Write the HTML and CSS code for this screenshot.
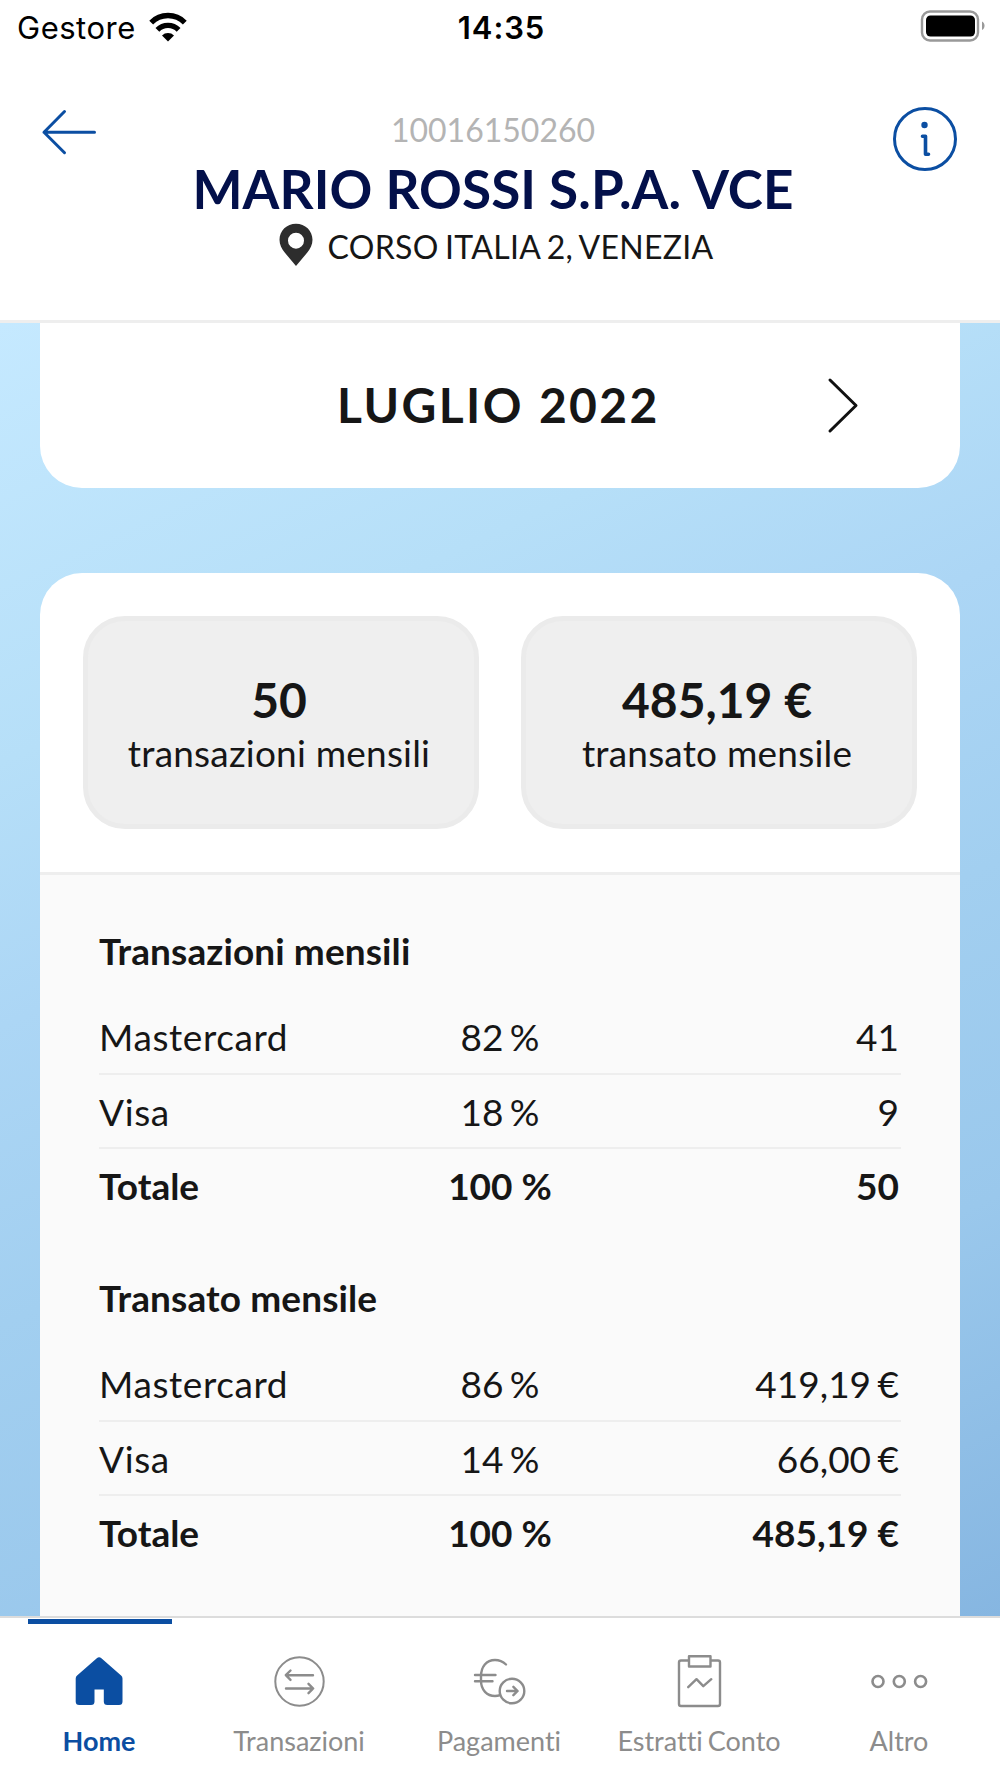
FILE: index.html
```html
<!DOCTYPE html>
<html lang="it">
<head>
    <meta charset="UTF-8">
    <meta name="viewport" content="width=device-width, initial-scale=1.0">
    <title>Mario Rossi S.P.A. - Luglio 2022</title>
    <link rel="stylesheet" href="styles.css">
</head>
<body>
    <div class="status-bar">
        <div class="carrier">
            <span class="carrier-name">Gestore</span>
            <svg class="wifi" width="38" height="30" viewBox="0 0 38 30" fill="none" stroke="#000">
                <path d="M2.2 10.600a23.600 23.600 0 0 1 33.600 0" stroke-width="5.400"/>
                <path d="M8.400 17.800a15 15 0 0 1 21.200 0" stroke-width="5.400"/>
                <path d="M19 29.500l-6-6a8.600 8.600 0 0 1 12 0z" fill="#000" stroke="none"/>
            </svg>
        </div>
        <span class="time">14:35</span>
        <div class="battery-box">
            <svg width="66" height="32" viewBox="0 0 66 32">
                <rect x="2" y="1.5" width="56" height="29" rx="8" fill="none" stroke="#999" stroke-width="2.4"/>
                <rect x="6" y="5.500" width="49" height="21" rx="4.500" fill="#000"/>
                <path d="M62 11.500c3.400 1.600 3.400 7 0 8.600z" fill="#999"/>
            </svg>
        </div>
    </div>

    <header class="header">
        <svg class="back" width="56" height="48" viewBox="0 0 56 48" fill="none" stroke="#0b4ea2" stroke-width="3" stroke-linecap="round" stroke-linejoin="round">
            <path d="M53.500 24.200H3M23.500 3.500L3 24.200l20.500 20.500"/>
        </svg>
        <div class="merchant">
            <p class="merchant-id">10016150260</p>
            <h1>MARIO ROSSI S.P.A. VCE</h1>
            <p class="address">
                <svg width="34" height="44" viewBox="0 0 34 44">
                    <path d="M17 .800C7.800.800.500 7.800.500 16.700c0 5 2.200 8.800 5 12.600L17 43l11.500-13.700c2.800-3.800 5-7.600 5-12.600C33.500 7.800 26.200.800 17 .800zM17 9.700a8 8 0 1 1 0 16 8 8 0 0 1 0-16z" fill="#2d2d2d"/>
                </svg>
                <span>CORSO ITALIA 2, VENEZIA</span>
            </p>
        </div>
        <svg class="info" width="66" height="66" viewBox="0 0 66 66" fill="none" stroke="#0b4ea2">
            <circle cx="33" cy="33" r="30.500" stroke-width="3"/>
            <circle cx="32.500" cy="19" r="3.200" fill="#0b4ea2" stroke="none"/>
            <path d="M30.500 30.300h3V48.200h3" stroke-width="3.600" stroke-linecap="round" stroke-linejoin="round"/>
        </svg>
    </header>

    <main class="content">
        <section class="month-card">
            <h2>LUGLIO 2022</h2>
            <svg class="next" width="34" height="58" viewBox="0 0 34 58" fill="none" stroke="#111" stroke-width="3" stroke-linecap="round" stroke-linejoin="round">
                <path d="M4 4l26 25.500L4 55"/>
            </svg>
        </section>

        <section class="summary-card">
            <div class="stats">
                <div class="stat">
                    <strong>50</strong>
                    <span class="stat-label">transazioni mensili</span>
                </div>
                <div class="stat">
                    <strong>485,19 €</strong>
                    <span class="stat-label">transato mensile</span>
                </div>
            </div>

            <div class="details">
                <h3>Transazioni mensili</h3>
                <div class="rows">
                    <div class="row"><span>Mastercard</span><span>82 %</span><span>41</span></div>
                    <div class="row"><span>Visa</span><span>18 %</span><span>9</span></div>
                    <div class="row total"><span>Totale</span><span>100 %</span><span>50</span></div>
                </div>
                <h3>Transato mensile</h3>
                <div class="rows">
                    <div class="row"><span>Mastercard</span><span>86 %</span><span>419,19 €</span></div>
                    <div class="row"><span>Visa</span><span>14 %</span><span>66,00 €</span></div>
                    <div class="row total"><span>Totale</span><span>100 %</span><span>485,19 €</span></div>
                </div>
            </div>
        </section>
    </main>

    <nav class="tabs">
        <a class="tab active">
            <svg width="56" height="56" viewBox="0 0 56 56">
                <path d="M25.800 5.200a3.500 3.500 0 0 1 4.600 0l19.700 17.200a4 4 0 0 1 1.400 3V48.500a3.500 3.500 0 0 1-3.500 3.500H36.300a3.500 3.500 0 0 1-3.500-3.500V36.500h-9.300V48.500a3.500 3.500 0 0 1-3.500 3.500H8.200a3.500 3.500 0 0 1-3.500-3.500V25.400a4 4 0 0 1 1.400-3z" fill="#0b4ea2"/>
            </svg>
            <span>Home</span>
        </a>
        <a class="tab">
            <svg width="56" height="56" viewBox="0 0 56 56" fill="none" stroke="#8c8c8c" stroke-width="2.400" stroke-linecap="round" stroke-linejoin="round">
                <circle cx="28.500" cy="28.500" r="24.200" stroke-width="2"/>
                <path d="M42 22.200H15.500M19.500 17.500l-4.700 4.700 4.700 4.700M15 35.500H42M37.500 30.800l4.700 4.700-4.700 4.700"/>
            </svg>
            <span>Transazioni</span>
        </a>
        <a class="tab">
            <svg width="56" height="56" viewBox="0 0 56 56" fill="none" stroke="#8c8c8c" stroke-width="2.400" stroke-linecap="round" stroke-linejoin="round">
                <path d="M35 11.500C31.500 8.200 28 7 24 7 15.500 7 10 13.500 10 23.500v4C10 37 16 43 24 43c2 0 3.500-.300 5-.900M4 22H24.500M4 28.300H21.500"/>
                <circle cx="41" cy="38" r="12.300"/>
                <path d="M36 38H46.200M42.400 33.800l4.200 4.200-4.200 4.200"/>
            </svg>
            <span>Pagamenti</span>
        </a>
        <a class="tab">
            <svg width="56" height="56" viewBox="0 0 56 56" fill="none" stroke="#8c8c8c" stroke-width="2.400" stroke-linejoin="round">
                <path d="M18 7.500H10a2 2 0 0 0-2 2V51a2 2 0 0 0 2 2H47a2 2 0 0 0 2-2V9.500a2 2 0 0 0-2-2H39.500"/>
                <rect x="18" y="3.200" width="21.500" height="10.300"/>
                <path d="M17.200 34.200l8.300-8 6.800 7 8-7" stroke-linecap="round"/>
            </svg>
            <span>Estratti Conto</span>
        </a>
        <a class="tab">
            <svg width="60" height="56" viewBox="0 0 60 56" fill="none" stroke="#8c8c8c" stroke-width="2.600">
                <circle cx="9" cy="28.500" r="5.500"/>
                <circle cx="30.300" cy="28.500" r="5.500"/>
                <circle cx="51.600" cy="28.500" r="5.500"/>
            </svg>
            <span>Altro</span>
        </a>
    </nav>
</body>
</html>
```

FILE: styles.css
```css
* {
    box-sizing: border-box;
}

body {
    font-family: Lato, sans-serif;
    font-variant-ligatures: none;
    background-color: #fff;
    color: #161616;
    margin: 0;
    height: 1778px;
    display: flex;
    flex-direction: column;
    overflow: hidden;
}

h1, h2, h3, p {
    margin: 0;
}

svg {
    display: block;
    flex-shrink: 0;
}

/* Barra di stato */
.status-bar {
    display: flex;
    height: 56px;
    padding: 0 14px 0 17px;
    font-family: Inter, sans-serif;
    font-size: 31px;
    line-height: 55px;
    color: #000;
}

.carrier, .battery-box {
    flex: 1;
    display: flex;
}

.carrier {
    gap: 13px;
}

.carrier-name {
    letter-spacing: 0.5px;
}

.wifi {
    margin-top: 12px;
}

.time {
    font-weight: 600;
    letter-spacing: 0.9px;
}

.battery-box {
    justify-content: flex-end;
    padding-top: 10px;
}

/* Intestazione */
.header {
    display: flex;
    justify-content: space-between;
    height: 267px;
    padding: 50px 42px 0 41px;
    border-bottom: 3px solid #eee;
}

.back {
    margin-top: 2px;
}

.merchant {
    text-align: center;
    padding-top: 4px;
    margin-right: 3px;
}

.merchant-id {
    font-size: 32px;
    line-height: 40px;
    color: #b4b4b4;
}

h1 {
    font-size: 53px;
    line-height: 64px;
    letter-spacing: 0.1px;
    margin-top: 7px;
    color: #03104a;
    white-space: nowrap;
}

.address {
    display: flex;
    justify-content: center;
    gap: 15px;
    font-size: 32px;
    line-height: 48px;
    letter-spacing: 0.3px;
    word-spacing: -2px;
    margin-top: 2px;
    padding-left: 6px;
}

/* Contenuto */
.content {
    flex: 1;
    min-height: 0;
    overflow: hidden;
    padding: 0 40px;
    background: linear-gradient(155deg, #c5e9ff 0%, #b6dff8 25%, #acd6f5 40%, #a2cff0 57%, #9ac8ec 76%, #86b6e1 100%);
}

.month-card {
    display: flex;
    align-items: center;
    justify-content: flex-end;
    height: 165px;
    padding: 0 100px 2px 297px;
    background-color: #fff;
    border-radius: 0 0 42px 42px;
}

h2 {
    flex: 1;
    font-size: 48px;
    line-height: 58px;
    letter-spacing: 2.4px;
    word-spacing: 1px;
}

.summary-card {
    margin-top: 85px;
    background-color: #fff;
    border-radius: 42px 42px 0 0;
    overflow: hidden;
}

.stats {
    display: flex;
    gap: 42px;
    padding: 43px;
    border-bottom: 3px solid #eee;
}

.stat {
    flex: 1;
    height: 213px;
    padding: 50px 4px 0 0;
    text-align: center;
    background-color: #efefef;
    border: 5px solid #ebebeb;
    border-radius: 42px;
}

.stat strong {
    display: block;
    font-size: 48px;
    line-height: 58px;
}

.stat-label {
    display: block;
    font-size: 37px;
    line-height: 48px;
    letter-spacing: 0.2px;
}

.details {
    padding: 52px 59px;
    background-color: #fafafa;
}

h3 {
    font-size: 37px;
    line-height: 48px;
    letter-spacing: 0.1px;
}

.rows {
    margin: 25px 0 50px;
}

.row {
    display: grid;
    grid-template-columns: 1fr 1fr 1fr;
    height: 74.7px;
    padding-top: 13px;
    font-size: 37px;
    line-height: 48px;
    word-spacing: -3px;
    border-bottom: 2px solid #eee;
}

.row span:first-child {
    letter-spacing: 0.6px;
}

.row span:nth-child(2) {
    text-align: center;
}

.row span:last-child {
    text-align: right;
    padding-right: 2px;
}

.total {
    font-weight: bold;
    word-spacing: 0;
    border-bottom: none;
}

.total span:first-child {
    letter-spacing: 0;
}

/* Barra inferiore */
.tabs {
    display: flex;
    height: 162px;
    border-top: 2px solid #dcdcdc;
}

.tab {
    width: 200px;
    display: flex;
    flex-direction: column;
    align-items: center;
    padding: 35px 2px 0 0;
    font-size: 27px;
    line-height: 34px;
    word-spacing: -2px;
    color: #8c8c8c;
    white-space: nowrap;
}

.tab span {
    margin-top: 15px;
}

.active {
    color: #0b4ea2;
    font-weight: bold;
}

.active::before {
    content: "";
    width: 144px;
    height: 5px;
    margin: -34px 0 29px 2px;
    background-color: #0b4ea2;
}
```
